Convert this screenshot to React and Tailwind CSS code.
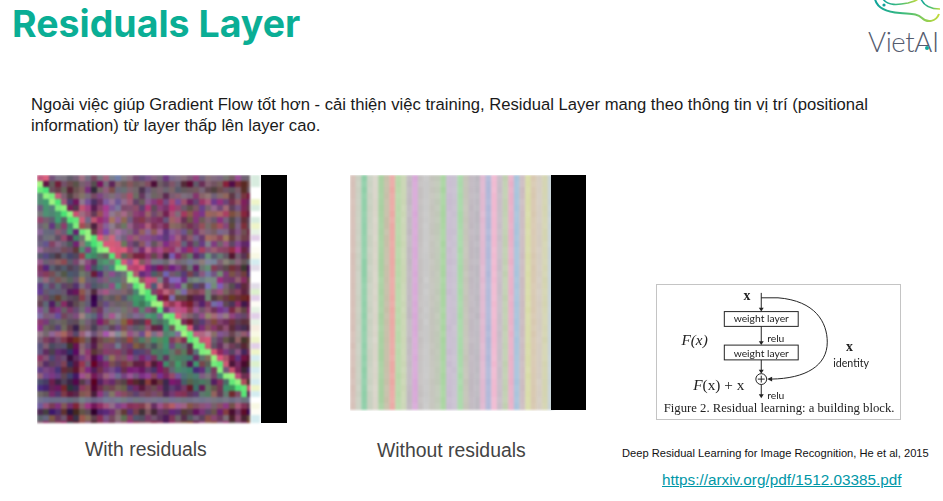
const rng = (seed) => { let s = seed; return () => { s = (s * 1664525 + 1013904223) >>> 0; return (s >>> 8) / 16777216; }; };
const clamp = (v) => Math.max(0, Math.min(255, Math.round(v)));
const mix = (a, b, t) => a.map((v, i) => v + (b[i] - v) * t);

function buildCells() {
  const R = rng(4242);
  const cols = 36, rows = 42;
  const cT = Array.from({ length: cols }, () => { const l = R() * 50 - 25; return [l + R() * 24 - 12, l + R() * 24 - 12, l + R() * 24 - 12]; });
  const rT = Array.from({ length: rows }, () => { const l = R() * 36 - 18; return [l + R() * 20 - 10, l + R() * 16 - 8, l + R() * 20 - 10]; });
  const cells = [];
  for (let r = 0; r < rows; r++) {
    for (let c = 0; c < cols; c++) {
      let col = [112, 62, 98];
      const n = () => (R() - 0.5) * 56;
      col = col.map((v, i) => v + cT[c][i] + rT[r][i] + n());
      const d = c - r + 1.5;
      if (d < 0 && r < 26 && R() < 0.5) col = mix(col, [90, 125, 115], 0.5);
      if (r < 4 && R() < 0.6) col = mix(col, [120, 135, 120], 0.5);
      if (r >= 13 && r <= 21 && c >= 20 && c <= 30 && d > 3 && R() < 0.4) col = mix(col, R() < 0.5 ? [120, 125, 215] : [100, 175, 130], 0.6);
      if (r === 14 && c > 18) col = mix(col, [125, 150, 125], 0.4);
      if (r === 37) col = mix(col, [122, 135, 150], 0.7);
      const near = r < 37;
      if (near && d < -0.5 && d >= (r > 26 ? -9 : -4) && R() < 0.65) col = mix(col, [55, 170, 110], 0.35 + R() * 0.5);
      if (near && d > 0.5 && d <= 4 && R() < (d < 2.5 ? 0.7 : 0.4)) col = mix(col, [235, 90, 125], 0.4 + R() * 0.5);
      if (near && Math.abs(d) <= 0.5 && R() < 0.9) col = mix([70, 225, 115], [165, 245, 130], R());
      cells.push({ r, c, fill: `rgb(${clamp(col[0])},${clamp(col[1])},${clamp(col[2])})` });
    }
  }
  return cells;
}
const cells = buildCells();
const stripPal = ['#e6f2e4', '#f8f8e4', '#d8ecdf', '#f6ecdf', '#e2dce8', '#ffffff', '#d4ecf0', '#eef4c8', '#e2cfe8', '#fdfcf4', '#dcf0cc'];
const stripR = rng(77);
const strip = Array.from({ length: 42 }, () => stripPal[Math.floor(stripR() * stripPal.length)]);

const stripes = ['#d6c0b8', '#cbd0c2', '#8fcfa8', '#c8d0c0', '#d8d4c8', '#a8d0a0', '#c6bfa8', '#eba8a4', '#b8d8a8', '#cad6b4', '#c0b8c0', '#d8a8d8', '#c4c0c0', '#c8c8c8', '#c4c4bc', '#c0c8b8', '#a8d4a0', '#c8bcd0', '#c8c0d0', '#a8d8a8', '#c4c4b8', '#c0b8c0', '#bcb8c0', '#e0b8d0', '#b0b8d8', '#f0b8d0', '#c8bcc8', '#c0d0b0', '#e8b0c8', '#a8c4dc', '#ccbcc0', '#d8dca8', '#d8c8b0', '#d4ccc0', '#d4d4b0', '#c8d4d8'];
const sR = rng(991);
const stripeCells = [];
stripes.forEach((f, i) => {
  for (let j = 0; j < 40; j++) stripeCells.push({ i, j, f, o: sR() * 0.09 });
});

function WithResiduals() {
  return (
    <svg width="250" height="250" viewBox="0 0 250 250" className="block">
      <g className="[filter:blur(1px)]">
        {cells.map((k) => (
          <rect key={k.r * 100 + k.c} x={k.c * 6} y={k.r * 6} width="6" height="6" fill={k.fill} shapeRendering="crispEdges" />
        ))}
        <rect x="213" y="0" width="12" height="250" fill="#fff" />
        {strip.map((f, i) => (
          <rect key={i} x="214" y={i * 6} width="9" height="6" fill={f} shapeRendering="crispEdges" />
        ))}
        <rect x="0" y="248" width="224" height="4" fill="#fff" />
      </g>
      <rect x="224" y="0" width="26" height="248" fill="#000" />
    </svg>
  );
}

function WithoutResiduals() {
  return (
    <svg width="236" height="236" viewBox="0 0 236 236" className="block">
      <g className="[filter:blur(0.8px)]">
        {stripeCells.map((k) => (
          <g key={k.i * 100 + k.j}>
            <rect x={k.i * 5.65} y={k.j * 6} width="6" height="6" fill={k.f} />
            <rect x={k.i * 5.65} y={k.j * 6} width="6" height="6" fill="#fff" opacity={k.o} />
          </g>
        ))}
        <rect x="0" y="235" width="236" height="3" fill="#fff" />
      </g>
      <rect x="201" y="0" width="35" height="235" fill="#000" />
    </svg>
  );
}

function Arrow({ x, y1, y2 }) {
  return (
    <g>
      <line x1={x} y1={y1} x2={x} y2={y2 - 3} stroke="#222" strokeWidth="1" />
      <path d={`M${x - 2.5} ${y2 - 4}L${x + 2.5} ${y2 - 4}L${x} ${y2}Z`} fill="#222" />
    </g>
  );
}

function Figure() {
  const sans = "[font-family:Lato,sans-serif]";
  const serif = "[font-family:'Liberation_Serif',serif]";
  return (
    <svg width="245" height="136" viewBox="0 0 245 136" className="block border border-[#c4c4c4] box-border">
      <g className="[filter:blur(0.4px)]" fill="#222">
        <text x="87" y="15" fontSize="14" fontWeight="700" className={serif}>x</text>
        <Arrow x={105} y1={8} y2={27} />
        <rect x="67.5" y="27" width="75" height="15" fill="#fff" stroke="#222" />
        <text x="105" y="38" fontSize="10.5" textAnchor="middle" className={sans}>weight layer</text>
        <Arrow x={105} y1={42} y2={61} />
        <text x="111" y="58" fontSize="10.5" className={sans}>relu</text>
        <rect x="67.5" y="61" width="75" height="15" fill="#fff" stroke="#222" />
        <text x="105" y="73" fontSize="10.5" textAnchor="middle" className={sans}>weight layer</text>
        <Arrow x={105} y1={76} y2={90} />
        <circle cx="105" cy="95.5" r="5.5" fill="#fff" stroke="#222" />
        <path d="M105 92V99M101.5 95.5H108.5" stroke="#222" fill="none" />
        <Arrow x={105} y1={101} y2={115} />
        <text x="111" y="116" fontSize="10.5" className={sans}>relu</text>
        <path d="M105 13H122C160 16 172 38 172 58C172 82 150 95 115 95.5" fill="none" stroke="#222" />
        <path d="M111 95.5L116 93L116 98Z" fill="#222" />
        <text x="24" y="61" fontSize="15.5" fontStyle="italic" className={serif}>F(x)</text>
        <text x="36" y="107" fontSize="15.5" className={serif}><tspan fontStyle="italic">F</tspan>(x) + x</text>
        <text x="191" y="67" fontSize="14" fontWeight="700" className={serif}>x</text>
        <text x="178" y="83" fontSize="10.8" className={sans}>identity</text>
        <text x="6" y="129" fontSize="12.9" className={serif}>Figure 2. Residual learning: a building block.</text>
      </g>
    </svg>
  );
}

function Logo() {
  return (
    <div className="relative w-[75px] h-[56px] shrink-0">
      <svg width="75" height="30" viewBox="0 0 75 30" className="block" fill="none">
        <defs>
          <linearGradient id="lg" x1="0" x2="1" y1="0" y2="0">
            <stop offset="0" stopColor="#0fa39b" />
            <stop offset="0.45" stopColor="#3dbb7c" />
            <stop offset="1" stopColor="#c2da3a" />
          </linearGradient>
        </defs>
        <path d="M7 -1C9 8 18 12 32 13C42 14 49 13 54 18C59 23 68 22 71 14" stroke="url(#lg)" strokeWidth="2" />
        <path d="M15 -1C20 6 30 5 40 3C44 2 48 1 50 -1" stroke="url(#lg)" strokeWidth="1.6" />
        <path d="M53 -1C56 6 62 9 72 9" stroke="url(#lg)" strokeWidth="1.6" />
        <circle cx="16" cy="5" r="1.6" fill="#0fa39b" />
      </svg>
      <div className="absolute left-0 top-[27px] text-[27.5px] leading-[30px] text-[#545b6e] font-light whitespace-nowrap tracking-[-0.4px] [font-family:Lato,sans-serif]">
        VietAI
      </div>
      <div className="absolute left-[57px] top-[46px] size-[4px] rounded-full bg-[#12a89d]" />
    </div>
  );
}

export default function App() {
  return (
    <div className="w-[943px] h-[501px] overflow-hidden bg-white [font-family:'Liberation_Sans',Arial,sans-serif]">
      <header className="flex justify-between h-[56px]">
        <h1 className="pl-3 pt-[2px] text-[37.5px] leading-[44px] font-bold text-[#0aae95] [font-family:Inter,sans-serif]">
          Residuals Layer
        </h1>
        <Logo />
      </header>
      <p className="mt-[38px] px-[31px] text-[16.64px] leading-[21px] text-[#1a1a1a]">
        Ngoài việc giúp Gradient Flow tốt hơn - cải thiện việc training, Residual Layer mang theo thông tin vị trí (positional information) từ layer thấp lên layer cao.
      </p>
      <div className="flex mt-[39px] pl-[37px]">
        <figure className="w-[250px]">
          <WithResiduals />
          <figcaption className="mt-[11px] pl-[48px] text-[19.4px] leading-[26px] text-[#444] whitespace-nowrap">With residuals</figcaption>
        </figure>
        <figure className="ml-[63px] w-[236px]">
          <WithoutResiduals />
          <figcaption className="mt-[26px] pl-[27px] text-[19.4px] leading-[26px] text-[#444] whitespace-nowrap">Without residuals</figcaption>
        </figure>
        <div className="ml-[36px] pt-[109px] flex flex-col">
          <div className="pl-[34px]"><Figure /></div>
          <p className="mt-[26px] text-[11.13px] leading-[14px] text-[#111] whitespace-nowrap">Deep Residual Learning for Image Recognition, He et al, 2015</p>
          <a className="mt-[11px] pl-[40px] text-[15.3px] leading-[18px] text-[#0097a7] underline whitespace-nowrap">https://arxiv.org/pdf/1512.03385.pdf</a>
        </div>
      </div>
    </div>
  );
}
